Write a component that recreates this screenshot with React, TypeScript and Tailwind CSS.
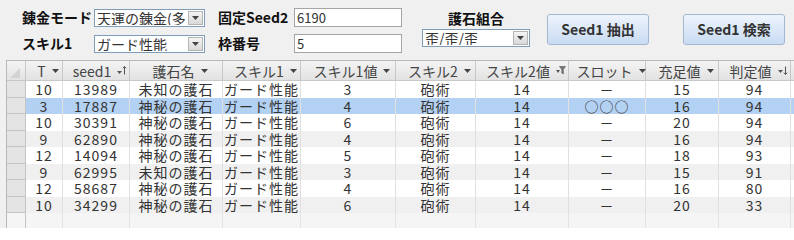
import React from "react";

type Row = {
  t: string;
  seed: string;
  name: string;
  skill1: string;
  v1: string;
  skill2: string;
  v2: string;
  slot: string;
  fill: string;
  judge: string;
};

const rows: Row[] = [
  { t: "10", seed: "13989", name: "未知の護石", skill1: "ガード性能", v1: "3", skill2: "砲術", v2: "14", slot: "－", fill: "15", judge: "94" },
  { t: "3", seed: "17887", name: "神秘の護石", skill1: "ガード性能", v1: "4", skill2: "砲術", v2: "14", slot: "○○○", fill: "16", judge: "94" },
  { t: "10", seed: "30391", name: "神秘の護石", skill1: "ガード性能", v1: "6", skill2: "砲術", v2: "14", slot: "－", fill: "20", judge: "94" },
  { t: "9", seed: "62890", name: "神秘の護石", skill1: "ガード性能", v1: "4", skill2: "砲術", v2: "14", slot: "－", fill: "16", judge: "94" },
  { t: "12", seed: "14094", name: "神秘の護石", skill1: "ガード性能", v1: "5", skill2: "砲術", v2: "14", slot: "－", fill: "18", judge: "93" },
  { t: "9", seed: "62995", name: "未知の護石", skill1: "ガード性能", v1: "3", skill2: "砲術", v2: "14", slot: "－", fill: "15", judge: "91" },
  { t: "12", seed: "58687", name: "神秘の護石", skill1: "ガード性能", v1: "4", skill2: "砲術", v2: "14", slot: "－", fill: "16", judge: "80" },
  { t: "10", seed: "34299", name: "神秘の護石", skill1: "ガード性能", v1: "6", skill2: "砲術", v2: "14", slot: "－", fill: "20", judge: "33" },
];

const font = { fontFamily: '"Noto Sans CJK JP", "Liberation Sans", sans-serif' };

function DropArrow() {
  return (
    <svg width="7" height="4" viewBox="0 0 7 4" className="shrink-0">
      <path d="M0 0h7L3.5 4z" fill="#444" />
    </svg>
  );
}

function SortUp() {
  return (
    <svg width="10" height="9" viewBox="0 0 10 9" className="shrink-0">
      <path d="M0 5h5L2.5 8z" fill="#555" />
      <path d="M7.5 0.5v8M5.8 2.3l1.7-1.8 1.7 1.8" stroke="#555" strokeWidth="1" fill="none" />
    </svg>
  );
}

function SortDown() {
  return (
    <svg width="10" height="9" viewBox="0 0 10 9" className="shrink-0">
      <path d="M0 4h5L2.5 7z" fill="#555" />
      <path d="M7.5 0.5v8M5.8 6.7l1.7 1.8 1.7-1.8" stroke="#555" strokeWidth="1" fill="none" />
    </svg>
  );
}

function Filter() {
  return (
    <svg width="10" height="9" viewBox="0 0 10 9" className="shrink-0">
      <path d="M0 4h4L2 7z" fill="#555" />
      <path d="M3.5 0.5h6L7.3 3.5v4.5L5.8 7V3.5z" fill="#777" stroke="#555" strokeWidth="0.6" />
    </svg>
  );
}

function Select({ value, width }: { value: string; width: string }) {
  return (
    <div className={`flex h-[18px] items-center border border-[#7f9db9] bg-white ${width}`}>
      <span className="flex-1 overflow-hidden whitespace-nowrap pl-[2px] text-[14px] leading-none text-[#333]">
        {value}
      </span>
      <div className="mr-[1px] flex h-[14px] w-[15px] shrink-0 items-center justify-center border border-[#b5b5b5] bg-gradient-to-b from-[#f4f4f4] to-[#d8d8d8]">
        <DropArrow />
      </div>
    </div>
  );
}

function Input({ value }: { value: string }) {
  return (
    <div className="flex h-[19px] w-[108px] items-center border border-[#a5a5a5] bg-white pl-[2px] text-[13px] leading-none text-[#333]">
      {value}
    </div>
  );
}

function Button({ label }: { label: string }) {
  return (
    <button className="flex h-[31px] w-[102px] items-center justify-center rounded-[3px] border border-[#a3b7d1] bg-gradient-to-b from-[#eef4fc] to-[#c8dbf2] text-[14px] font-bold text-[#333]">
      {label}
    </button>
  );
}

const cols = [
  { key: "t", label: "T", w: "w-[37px]", icon: <DropArrow /> },
  { key: "seed", label: "seed1", w: "w-[67px]", icon: <SortUp /> },
  { key: "name", label: "護石名", w: "w-[93px]", icon: <DropArrow /> },
  { key: "skill1", label: "スキル1", w: "w-[78px]", icon: <DropArrow /> },
  { key: "v1", label: "スキル1値", w: "w-[95px]", icon: <DropArrow /> },
  { key: "skill2", label: "スキル2", w: "w-[80px]", icon: <DropArrow /> },
  { key: "v2", label: "スキル2値", w: "w-[93px]", icon: <Filter /> },
  { key: "slot", label: "スロット", w: "w-[77px]", icon: <DropArrow /> },
  { key: "fill", label: "充足値", w: "w-[73px]", icon: <DropArrow /> },
  { key: "judge", label: "判定値", w: "w-[72px]", icon: <SortDown /> },
] as const;

export default function App() {
  return (
    <div className="h-[228px] w-[794px] overflow-hidden bg-[#f0f0f0]" style={font}>
      <div className="flex h-[60px] items-start">
        <div className="ml-[22px] mt-[7px] flex flex-col gap-[5px]">
          <div className="flex items-center">
            <span className="w-[72px] whitespace-nowrap text-[14px] font-bold text-[#111]">錬金モード</span>
            <Select value="天運の錬金(多" width="w-[111px]" />
            <span className="ml-[13px] w-[76px] whitespace-nowrap text-[14px] font-bold text-[#111]">固定Seed2</span>
            <Input value="6190" />
          </div>
          <div className="flex items-center">
            <span className="w-[72px] whitespace-nowrap text-[14px] font-bold text-[#111]">スキル1</span>
            <Select value="ガード性能" width="w-[111px]" />
            <span className="ml-[13px] w-[76px] whitespace-nowrap text-[14px] font-bold text-[#111]">枠番号</span>
            <Input value="5" />
          </div>
        </div>
        <div className="ml-[20px] mt-[9px] flex flex-col items-center gap-[2px]">
          <span className="text-[14px] font-bold leading-[18px] text-[#111]">護石組合</span>
          <Select value="歪/歪/歪" width="w-[108px]" />
        </div>
        <div className="ml-[17px] mt-[14px] flex gap-[34px]">
          <Button label="Seed1 抽出" />
          <Button label="Seed1 検索" />
        </div>
      </div>

      <div className="ml-[6px] h-[168px] border-l border-t border-[#b8b8b8] bg-[#f5f5f5]">
        <div className="flex h-[20px] border-b border-[#c8c8c8] bg-gradient-to-b from-[#f4f4f4] to-[#e2e2e2]">
          <div className="flex w-[19px] items-end border-r border-[#c8c8c8] pb-[2px] pl-[3px]">
            <svg width="10" height="10" viewBox="0 0 10 10">
              <path d="M10 0v10H0z" fill="#d4d4d4" />
            </svg>
          </div>
          {cols.map((c) => (
            <div
              key={c.key}
              className={`flex items-center justify-center gap-[6px] border-r border-[#c8c8c8] pl-[8px] text-[14px] leading-none text-[#444] ${c.w}`}
            >
              <span className="whitespace-nowrap">{c.label}</span>
              {c.icon}
            </div>
          ))}
        </div>
        {rows.map((r, i) => {
          const bg = i === 1 ? "bg-[#b3d1f2]" : i % 2 === 0 ? "bg-white" : "bg-[#f0f0f0]";
          return (
            <div key={r.seed} className="flex h-[16.5px]">
              <div className="w-[19px] border-r border-b border-[#c4c4c4] bg-[#e4e4e4]" />
              {cols.map((c) => (
                <div
                  key={c.key}
                  className={`flex items-center justify-center border-r border-[#e0e0e0] text-[14px] leading-none tracking-[1px] text-[#333] ${c.w} ${bg}`}
                >
                  {r[c.key]}
                </div>
              ))}
              <div className={`flex-1 ${bg}`} />
            </div>
          );
        })}
        <div className="flex h-[20px]">
          <div className="w-[19px] border-r border-[#c4c4c4]" />
          {cols.map((c) => (
            <div key={c.key} className={`border-r border-[#e4e4e4] ${c.w}`} />
          ))}
        </div>
      </div>
    </div>
  );
}
